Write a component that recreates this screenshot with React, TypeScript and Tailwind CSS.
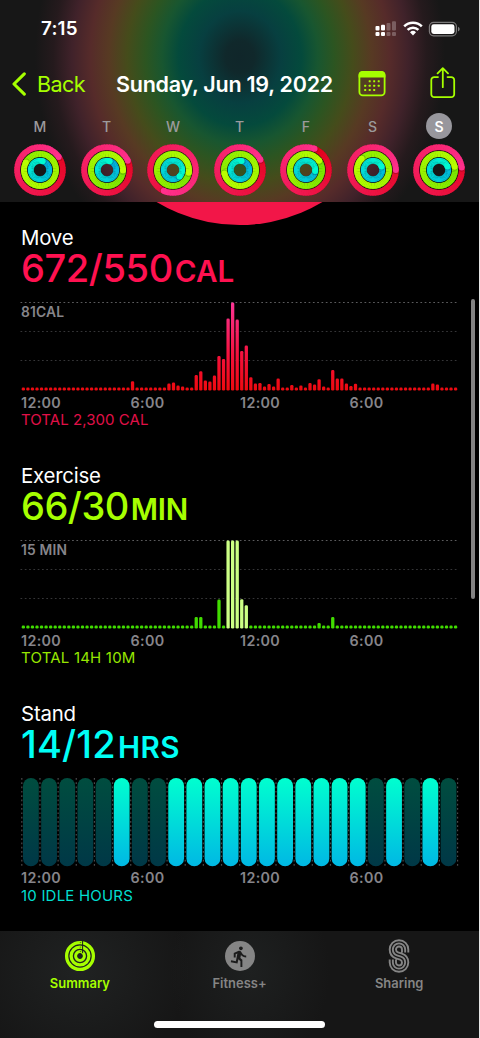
import clsx from "clsx";
import React from "react";
import { MdDirectionsRun } from "react-icons/md";

type RGB = [number, number, number];

interface DayRings {
  label: string;
  // angle (degrees, clockwise from the top) where each ring's last lap ends
  move: number;
  exercise: number;
  stand: number;
  active?: boolean;
}

const days: DayRings[] = [
  { label: "M", move: 55, exercise: 298, stand: 17 },
  { label: "T", move: 66, exercise: 92, stand: 17 },
  { label: "W", move: 204, exercise: 100, stand: 135 },
  { label: "T", move: 63, exercise: 257, stand: 10 },
  { label: "F", move: 22, exercise: 55, stand: 97 },
  { label: "S", move: 90, exercise: 315, stand: 68 },
  { label: "S", move: 84, exercise: 78, stand: 68, active: true },
];

const fillBars = (peaks: Record<number, number>) =>
  Array.from({ length: 96 }, (_, i) => peaks[i] ?? 3);

const moveBars = fillBars({
  24: 9.3, 32: 7, 33: 8, 34: 5, 35: 4, 38: 15.5, 39: 19.3, 40: 10, 41: 9,
  42: 15, 43: 34.5, 44: 31.5, 45: 72, 46: 88, 47: 71, 48: 39.7, 49: 45,
  50: 13.3, 51: 7, 52: 7.7, 53: 4, 54: 6.5, 55: 4, 56: 12, 59: 5.7, 61: 5,
  63: 7.5, 64: 6, 65: 11.3, 66: 4, 68: 20.5, 69: 12, 70: 12, 71: 7, 72: 4.7,
  73: 6.8, 90: 7, 91: 6,
});

const exerciseBars = fillBars({
  38: 11.5, 39: 11.5, 43: 29, 45: 88, 46: 88, 47: 88, 48: 29.3, 49: 23.3,
  65: 5.5, 68: 11.5,
});

const stoodHours = [5, 8, 9, 10, 11, 12, 13, 14, 15, 16, 17, 18, 20, 22];

const mix = (a: RGB, b: RGB, t: number) =>
  `rgb(${a.map((v, i) => Math.round(v + (b[i] - v) * t)).join(",")})`;

const polar = (r: number, deg: number) => {
  const rad = ((deg - 90) * Math.PI) / 180;
  return [r * Math.cos(rad), r * Math.sin(rad)];
};

const Ring = ({
  r,
  end,
  from,
  to,
}: {
  r: number;
  end: number;
  from: RGB;
  to: RGB;
}) => {
  const step = 6;
  const [cx, cy] = polar(r, end);
  const [sx, sy] = polar(r, end + (1.2 * 180) / (Math.PI * r));

  return (
    <g>
      {Array.from({ length: 360 / step }, (_, i) => {
        const angle = i * step;
        const travelled = angle < end ? angle + 360 : angle;
        const [x1, y1] = polar(r, angle - 0.8);
        const [x2, y2] = polar(r, angle + step + 0.8);
        return (
          <path
            key={i}
            d={`M${x1} ${y1}A${r} ${r} 0 0 1 ${x2} ${y2}`}
            stroke={mix(from, to, Math.min(1, travelled / (360 + end)))}
            strokeWidth="6"
            fill="none"
          />
        );
      })}
      <circle cx={sx} cy={sy} r="2.9" fill="#000" opacity="0.18" />
      <circle cx={cx} cy={cy} r="3" fill={mix(from, to, 1)} />
    </g>
  );
};

const ActivityRings = ({ day }: { day: DayRings }) => (
  <svg width="54" height="54" viewBox="-27 -27 54 54">
    <circle r="15.9" fill="none" stroke="#000" strokeOpacity="0.6" strokeWidth="19.5" />
    <Ring r={22.8} end={day.move} from={[225, 0, 20]} to={[255, 48, 140]} />
    <Ring r={16} end={day.exercise} from={[105, 225, 0]} to={[185, 255, 0]} />
    <Ring r={9.2} end={day.stand} from={[0, 170, 225]} to={[0, 250, 208]} />
  </svg>
);

const StatusIcons = () => (
  <svg width="86" height="18" viewBox="0 0 86 18" className="mt-px ml-auto">
    <g fill="#fff">
      <rect x="0.5" y="7" width="4" height="4.5" rx="1" />
      <rect x="6" y="5.8" width="4" height="5.7" rx="1" />
      <rect x="0.5" y="13" width="4" height="4" rx="1" />
      <rect x="6" y="13" width="4" height="4" rx="1" />
      <g opacity="0.25">
        <rect x="11.5" y="4" width="4" height="7.5" rx="1" />
        <rect x="17" y="2.3" width="4" height="9.2" rx="1" />
        <rect x="11.5" y="13" width="4" height="4" rx="1" />
        <rect x="17" y="13" width="4" height="4" rx="1" />
      </g>
      <path d="M38 16.4 L35 13.3 A4.3 4.3 0 0 1 41 13.3 Z" />
    </g>
    <g fill="none" stroke="#fff" strokeWidth="2.5">
      <path d="M32.6 10.9 A7.6 7.6 0 0 1 43.4 10.9" />
      <path d="M29.2 7.3 A12.4 12.4 0 0 1 46.8 7.3" />
    </g>
    <rect x="54.4" y="3.4" width="27" height="13.4" rx="4.2" fill="none" stroke="#fff" strokeOpacity="0.42" strokeWidth="1.2" />
    <rect x="56.3" y="5.3" width="23.2" height="9.6" rx="2.4" fill="#fff" />
    <path d="M83 7.8 v4.6 q1.7 -0.7 1.7 -2.3 t-1.7 -2.3" fill="#fff" fillOpacity="0.45" />
  </svg>
);

const CalendarIcon = () => (
  <svg width="28" height="26" viewBox="0 0 28 26" fill="#a6ff00">
    <rect x="1.4" y="1" width="25.2" height="23.4" rx="3.4" fill="none" stroke="#a6ff00" strokeWidth="1.8" />
    <path d="M0.6 6.6 V4 A3.6 3.6 0 0 1 4.2 0.2 H23.8 A3.6 3.6 0 0 1 27.4 4 V6.6 Z" />
    {[
      [10.2, 9], [14.7, 9], [19.2, 9],
      [5.7, 13.4], [10.2, 13.4], [14.7, 13.4], [19.2, 13.4],
      [5.7, 17.8], [10.2, 17.8], [14.7, 17.8],
    ].map(([x, y]) => (
      <rect key={`${x}-${y}`} x={x + 0.5} y={y + 0.3} width="2" height="2" rx="0.5" />
    ))}
  </svg>
);

const ShareIcon = () => (
  <svg width="26" height="32" viewBox="0 0 26 32" fill="none" stroke="#a6ff00" strokeWidth="1.8" strokeLinecap="round" strokeLinejoin="round">
    <path d="M8 10.1 H4.3 A3 3 0 0 0 1.3 13.1 V27.2 A3 3 0 0 0 4.3 30.2 H21.2 A3 3 0 0 0 24.2 27.2 V13.1 A3 3 0 0 0 21.2 10.1 H17.5" />
    <path d="M12.8 20.2 V1.6 M7.6 6.4 L12.8 1.2 L18 6.4" />
  </svg>
);

const Header = () => (
  <header className="relative h-[202px] shrink-0 bg-[#171717] bg-[radial-gradient(ellipse_205px_230px_at_240px_57px,#10262a_0%,#10282b_7%,#073f40_20%,#044a3c_30%,#185630_38%,#2c5521_46%,#454c1b_55%,#573a23_64%,#562b2a_73%,#40222a_82%,#251a1d_91%,#171717_100%)]">
    <div className="flex h-[61px] items-start pt-[18px] pr-[18px] pl-[41px]">
      <span className="text-[18.8px] leading-[22px] font-semibold tracking-[0.2px] text-white">7:15</span>
      <StatusIcons />
    </div>

    <div className="flex h-[46px] items-center pl-3">
      <div className="flex w-[104px] items-center">
        <svg width="15" height="24" viewBox="0 0 15 24" fill="none" stroke="#a6ff00" strokeWidth="3.1" strokeLinecap="round" strokeLinejoin="round">
          <path d="M12.3 1.8 L2 12 L12.3 22.2" />
        </svg>
        <span className="ml-[10px] text-[21.6px] tracking-[-0.6px] text-[#a6ff00]">Back</span>
      </div>
      <h1 className="w-[242px] text-[21.5px] font-semibold tracking-[-0.25px] whitespace-nowrap text-white">
        Sunday, Jun 19, 2022
      </h1>
      <CalendarIcon />
      <div className="-mt-[2px] ml-[44px]">
        <ShareIcon />
      </div>
    </div>

    <div className="flex h-[95px] justify-between px-[13px] pt-[6px]">
      {days.map((day, index) => (
        <div key={index} className="flex w-[54px] flex-col items-center">
          <span
            className={clsx(
              "flex h-[26px] w-[26px] items-center justify-center rounded-full text-[14px]",
              day.active ? "bg-[#98979d] font-semibold text-white" : "font-medium text-[#9c9a9c]"
            )}
          >
            {day.label}
          </span>
          <div className="mt-[4px]">
            <ActivityRings day={day} />
          </div>
        </div>
      ))}
    </div>
  </header>
);

const BarChart = ({
  values,
  caption,
  color,
}: {
  values: number[];
  caption: string;
  color: (height: number) => string;
}) => (
  <svg width="440" height="92" viewBox="0 0 440 92" className="-ml-px block">
    <defs>
      <linearGradient id="moveBar" gradientUnits="userSpaceOnUse" x1="0" y1="90" x2="0" y2="2">
        <stop offset="0" stopColor="#ee0a10" />
        <stop offset="0.4" stopColor="#f5113c" />
        <stop offset="1" stopColor="#fb3596" />
      </linearGradient>
    </defs>
    {[2.5, 31.5, 60.5].map((y, i) => (
      <line key={y} x1="0.5" x2="437" y1={y} y2={y} stroke={i === 0 ? "#5c5c5e" : "#363638"} strokeWidth="1.2" strokeDasharray="1.7 2.6" />
    ))}
    <text x="1" y="16.8" className="fill-[#86858a] font-[Inter,sans-serif] text-[13.8px] font-semibold tracking-[0.2px]">
      {caption}
    </text>
    {values.map((height, i) => (
      <rect key={i} x={1.7 + i * 4.55} y={90.6 - height} width="3.3" height={height} rx="1.3" fill={color(height)} />
    ))}
  </svg>
);

const StandChart = () => (
  <svg width="440" height="92" viewBox="0 0 440 92" className="-ml-px block">
    <defs>
      <linearGradient id="stood" x1="0" y1="0" x2="0" y2="1">
        <stop offset="0" stopColor="#00ffcf" />
        <stop offset="1" stopColor="#00b8e4" />
      </linearGradient>
      <linearGradient id="idle" x1="0" y1="0" x2="0" y2="1">
        <stop offset="0" stopColor="#004d3f" />
        <stop offset="1" stopColor="#003847" />
      </linearGradient>
    </defs>
    {Array.from({ length: 25 }, (_, i) => (
      <line key={i} x1={1.8 + i * 18.157} x2={1.8 + i * 18.157} y1="2" y2="90" stroke="#4a4a4c" strokeWidth="1.2" strokeDasharray="1.7 2.6" />
    ))}
    {Array.from({ length: 24 }, (_, i) => (
      <rect
        key={i}
        x={3 + i * 18.157}
        y="2"
        width="15.8"
        height="88.3"
        rx="7.9"
        fill={stoodHours.includes(i) ? "url(#stood)" : "url(#idle)"}
      />
    ))}
  </svg>
);

interface MetricProps {
  title: string;
  value: string;
  unit: string;
  footer: string;
  valueClass: string;
  unitClass: string;
  footerClass: string;
  children: React.ReactNode;
}

const Metric = ({ title, value, unit, footer, valueClass, unitClass, footerClass, children }: MetricProps) => (
  <section className="h-[237.8px] pl-[21px]">
    <h2 className="text-[20.4px] leading-[24px] tracking-[-0.2px] text-white">{title}</h2>
    <p className={clsx("h-[50px] text-[38px] leading-[37px] font-medium whitespace-nowrap", valueClass)}>
      {value}
      <span className={clsx("ml-[2px] text-[29.6px] font-semibold", unitClass)}>{unit}</span>
    </p>
    {children}
    <div className="flex h-[20px] items-center pt-px text-[14.3px] font-semibold tracking-[0.35px] text-[#86858a]">
      <span className="w-[109.5px]">12:00</span>
      <span className="w-[109.5px]">6:00</span>
      <span className="w-[109.5px]">12:00</span>
      <span>6:00</span>
    </div>
    <p className={clsx("text-[15px] leading-[16px]", footerClass)}>{footer}</p>
  </section>
);

const SummaryIcon = () => (
  <svg width="32" height="34" viewBox="-16 -17 32 34" fill="none" stroke="#a6ff00" strokeWidth="3.3">
    <circle r="13.4" />
    <circle r="8.9" />
    <circle r="4.4" strokeWidth="3" />
    <path d="M2.6 -15.5 V-2.8" stroke="#1b1c1c" strokeWidth="1" />
    <path d="M-0.2 -13.4 H1.2 M-0.2 -8.9 H1.2 M-0.2 -4.4 H1.2" stroke="#1b1c1c" strokeWidth="0.6" />
  </svg>
);

const FitnessIcon = () => (
  <span className="my-[2px] flex h-[30px] w-[30px] items-center justify-center rounded-full bg-[#858585]">
    <MdDirectionsRun className="h-[23px] w-[23px] text-[#1c1c1c]" />
  </span>
);

// unit normal of the straight part of the S, shared by all strands
const NX = 0.324;
const NY = 0.946;

const SharingIcon = () => (
  <svg width="32" height="34" viewBox="-16 -17 32 34" fill="none" stroke="#858585" strokeWidth="1.9">
    {/* three parallel strands that swap radius between the two bowls */}
    {[
      [9.3, 3],
      [6.15, 6.15],
      [3, 9.3],
    ].map(([top, bottom]) => (
      <path
        key={top}
        d={`M${top} -3.6 V-6.5 A${top} ${top} 0 0 0 ${-top} -6.5 A${top} ${top} 0 0 0 ${-top * NX} ${-6.5 + top * NY} L${bottom * NX} ${6.5 - bottom * NY} A${bottom} ${bottom} 0 0 1 ${bottom} 6.5 A${bottom} ${bottom} 0 0 1 ${-bottom} 6.5 V3.6`}
      />
    ))}
  </svg>
);

const TabItem = ({ label, active, children }: { label: string; active?: boolean; children: React.ReactNode }) => (
  <div className="flex flex-1 flex-col items-center pt-[8px]">
    {children}
    <span
      className={clsx(
        "mt-px text-[12.9px] leading-[20px] font-semibold tracking-[0.05px]",
        active ? "text-[#a6ff00]" : "text-[#858585]"
      )}
    >
      {label}
    </span>
  </div>
);

const TabBar = () => (
  <nav className="relative flex h-[107px] shrink-0 flex-col bg-[#161616] bg-[radial-gradient(ellipse_110px_100px_at_80px_40px,#202222,transparent),radial-gradient(ellipse_80px_100px_at_250px_40px,#1e2020,transparent)]">
    <div className="flex h-[90px]">
      <TabItem label="Summary" active>
        <SummaryIcon />
      </TabItem>
      <TabItem label="Fitness+">
        <FitnessIcon />
      </TabItem>
      <TabItem label="Sharing">
        <SharingIcon />
      </TabItem>
    </div>
    <div className="mx-auto h-[7px] w-[171px] rounded-full bg-white" />
  </nav>
);

const App = () => {
  return (
    <div className="h-[1038px] w-[480px] overflow-hidden bg-[#e6e6e6] font-[Inter,sans-serif]">
      <div className="relative flex h-full w-[479px] flex-col bg-black">
        <Header />

        <main className="relative flex-1 overflow-hidden">
          {/* bottom edge of the large ring scrolled under the header */}
          <svg width="479" height="24" viewBox="0 202 479 24" className="block">
            <circle cx="239.5" cy="64" r="161" fill="#f21648" />
          </svg>
          <Metric
            title="Move"
            value="672/550"
            unit="CAL"
            footer="TOTAL 2,300 CAL"
            valueClass="text-[#ff1150] tracking-[-0.4px]"
            unitClass="tracking-[0px]"
            footerClass="text-[#e01048] tracking-[0.05px]"
          >
            <BarChart values={moveBars} caption="81CAL" color={() => "url(#moveBar)"} />
          </Metric>
          <Metric
            title="Exercise"
            value="66/30"
            unit="MIN"
            footer="TOTAL 14H 10M"
            valueClass="text-[#a6ff00] tracking-[-0.5px]"
            unitClass="tracking-[-0.3px]"
            footerClass="text-[#96e600] tracking-[0.2px]"
          >
            <BarChart
              values={exerciseBars}
              caption="15 MIN"
              color={(height) => (height > 80 || (height > 23 && height < 24) || height === 29.3 ? "#ccff85" : "#41dc00")}
            />
          </Metric>
          <Metric
            title="Stand"
            value="14/12"
            unit="HRS"
            footer="10 IDLE HOURS"
            valueClass="text-[#00fff6] tracking-[0.2px]"
            unitClass="tracking-[0.5px]"
            footerClass="text-[#00dfd0] tracking-[0.2px]"
          >
            <StandChart />
          </Metric>
        </main>

        <TabBar />

        <div className="absolute top-[299px] right-[4px] h-[300px] w-[4px] rounded-full bg-[#848484]" />
      </div>
    </div>
  );
};

export default App;
